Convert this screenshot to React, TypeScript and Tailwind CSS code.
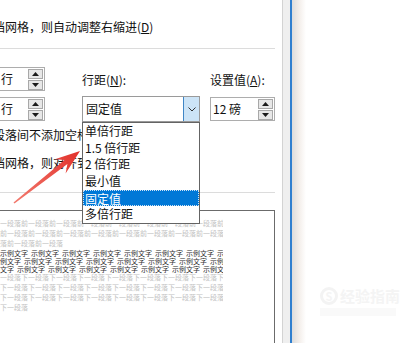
import React from "react";

const FONT = "font-['Noto_Sans_CJK_SC','Liberation_Sans',sans-serif]";

function SpinButton({ up }: { up?: boolean }) {
  return (
    <div className="w-[15px] h-[10px] border border-[#a8a8a8] bg-[#e7e7e7] flex items-center justify-center">
      <svg width="7" height="4" viewBox="0 0 7 4">
        <path d={up ? "M0 4 L3.5 0 L7 4 Z" : "M0 0 L3.5 4 L7 0 Z"} fill="#1a1a1a" />
      </svg>
    </div>
  );
}

function Spinner({ text, className }: { text: string; className: string }) {
  return (
    <div className={`h-[24px] border border-[#adadad] bg-white flex items-center justify-between pl-[2px] pr-[1px] ${className}`}>
      <span className="text-[12px] leading-[16px] text-[#111]">{text}</span>
      <div className="flex flex-col gap-[1px]">
        <SpinButton up />
        <SpinButton />
      </div>
    </div>
  );
}

const ITEMS = ["单倍行距", "1.5 倍行距", "2 倍行距", "最小值", "固定值", "多倍行距"];

function GrayLine({ text, ml }: { text: string; ml: string }) {
  return (
    <div className={`h-[10px] leading-[10px] text-[7px] text-[#c2c2c2] whitespace-nowrap ${ml}`}>{text}</div>
  );
}

function SampleLine({ ml }: { ml: string }) {
  return (
    <div className={`h-[8px] leading-[8px] text-[7px] text-[#2e2e2e] whitespace-nowrap flex gap-[3px] ${ml}`}>
      {Array.from({ length: 9 }).map((_, i) => (
        <span key={i}>示例文字</span>
      ))}
    </div>
  );
}

export default function App() {
  const prev = "前一段落".repeat(12);
  const next = "下一段落".repeat(12);

  return (
    <div className={`relative w-[420px] h-[343px] overflow-hidden bg-white flex ${FONT}`}>
      {/* dialog tab page */}
      <div className="relative w-[283px] shrink-0 border-r border-[#d3d3d3] bg-white pr-[7px] text-[#111]">
        <div className="pt-[19px] h-[48px] -ml-[19px] text-[12px] leading-[16px] whitespace-nowrap">
          文档网格，则自动调整右缩进(<span className="underline">D</span>)
        </div>
        <div className="h-px bg-[#dcdcdc]" />

        <div className="flex mt-[18px]">
          <div className="w-[45px] flex flex-col gap-[6px]">
            <Spinner text="行" className="-ml-[20px] w-[65px] pl-[20px]" />
            <Spinner text="行" className="-ml-[20px] w-[65px] pl-[20px]" />
          </div>

          <div className="ml-[37px] w-[118px] flex flex-col">
            <div className="pt-[5px] text-[12px] leading-[16px]">
              行距(<span className="underline">N</span>):
            </div>
            <div className="mt-[8px] h-[26px] border border-[#9a9a9a] bg-white flex items-stretch">
              <span className="flex-1 pl-[3px] text-[12px] leading-[24px]">固定值</span>
              <div className="w-[16px] bg-[#cce4f7] border-l border-[#3f86c6] flex items-center justify-center">
                <svg width="8" height="5" viewBox="0 0 8 5">
                  <path d="M0.5 0.5 L4 4 L7.5 0.5" fill="none" stroke="#333" strokeWidth="1" />
                </svg>
              </div>
            </div>
          </div>

          <div className="ml-[10px] w-[65px] flex flex-col">
            <div className="pt-[5px] text-[12px] leading-[16px] whitespace-nowrap">
              设置值(<span className="underline">A</span>):
            </div>
            <Spinner text="12 磅" className="mt-[9px] w-[65px]" />
          </div>
        </div>

        <div className="mt-[5px] -ml-[19px] text-[12px] leading-[16px] whitespace-nowrap">
          的段落间不添加空格(<span className="underline">C</span>)
        </div>
        <div className="mt-[12px] -ml-[7px] text-[12px] leading-[16px] whitespace-nowrap">
          档网格，则对齐到网格(<span className="underline">W</span>)
        </div>
        <div className="mt-[21px] h-px bg-[#dcdcdc]" />

        <div className="mt-[17px] -ml-[10px] h-[140px] border-t border-r border-[#6b6b6b] pt-[7px]">
          <div className="w-[233px] overflow-hidden">
            <GrayLine text={prev} ml="ml-[3px]" />
            <GrayLine text={"一" + prev} ml="ml-[3px]" />
            <GrayLine text="段落前一段落前一段落" ml="ml-[3px]" />
            <div className="mt-[1px]">
              <SampleLine ml="ml-[10px]" />
              <SampleLine ml="ml-[3px]" />
              <SampleLine ml="-ml-[4px]" />
            </div>
            <div className="mt-[-1px]">
              <GrayLine text={next} ml="ml-[3px]" />
              <GrayLine text={"一" + next} ml="ml-[3px]" />
              <GrayLine text={"段" + next} ml="ml-[3px]" />
              <GrayLine text="下一段落" ml="ml-[10px]" />
            </div>
          </div>
        </div>

        {/* open dropdown list */}
        <div className="absolute left-[82px] top-[122px] w-[118px] h-[102px] border border-[#646464] bg-white z-10 flex flex-col">
          {ITEMS.map((item) => (
            <div
              key={item}
              className={
                item === "固定值"
                  ? "h-[16.67px] leading-[15px] pl-[1px] text-[12px] bg-[#0078d7] text-white border border-dotted border-[#cfe3f5]"
                  : "h-[16.67px] leading-[16.67px] pl-[2px] text-[12px] text-[#111]"
              }
            >
              {item}
            </div>
          ))}
        </div>
      </div>

      {/* window frame */}
      <div className="w-[7px] shrink-0 bg-[#efefef]" />
      <div className="w-[2px] shrink-0 bg-[#2f7fcf]" />
      <div className="w-[14px] shrink-0 bg-gradient-to-r from-[#dcdcdc] via-[#f3eeea] to-white" />
      <div className="flex-1 bg-white" />

      {/* watermark */}
      <div className="absolute left-[320px] top-[286px] flex flex-col gap-[2px] text-[#f4f4f4]">
        <div className="flex items-center gap-[2px]">
          <div className="w-[18px] h-[18px] rounded-full border-[3px] border-[#f3f3f3] flex items-center justify-center text-[11px] font-bold leading-none">
            S
          </div>
          <span className="text-[15px] leading-[20px] font-bold">经验指南</span>
        </div>
        <div className="h-[8px] w-[76px] bg-[#f9f9f9]" />
      </div>

      {/* red annotation arrow */}
      <svg className="absolute left-0 top-0 z-20 pointer-events-none" width="420" height="343" viewBox="0 0 420 343">
        <defs>
          <linearGradient id="arrowGrad" x1="14" y1="203" x2="80" y2="151" gradientUnits="userSpaceOnUse">
            <stop offset="0%" stopColor="#f37b6f" />
            <stop offset="100%" stopColor="#e2312b" />
          </linearGradient>
        </defs>
        <polygon
          points="80,151 65.6,173.4 67.4,164.1 14.5,203.6 13.5,202.4 64.4,160.1 54.9,159.2"
          fill="url(#arrowGrad)"
        />
      </svg>
    </div>
  );
}
